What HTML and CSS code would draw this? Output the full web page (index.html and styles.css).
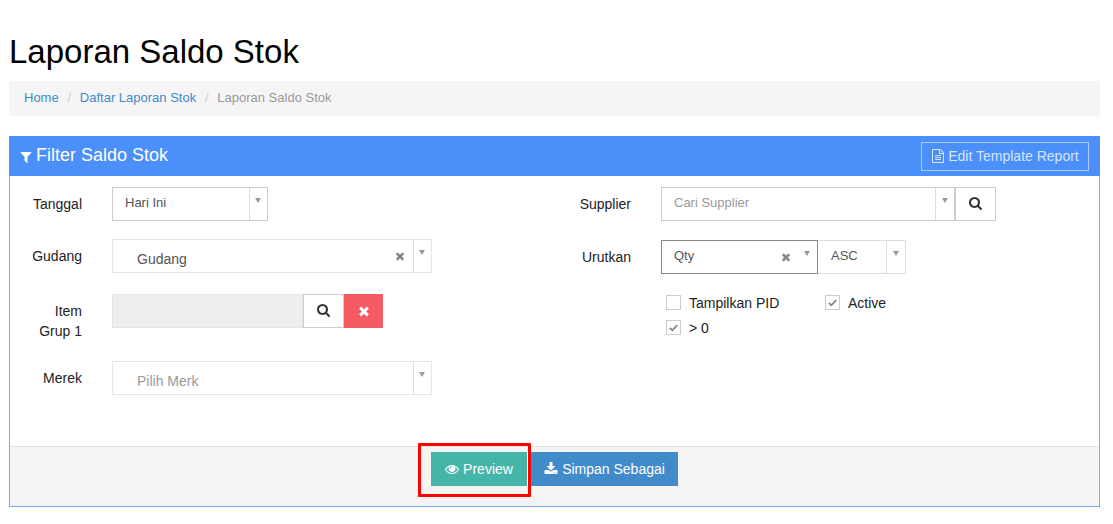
FILE: index.html
```html
<!DOCTYPE html>
<html lang="id">
<head>
<meta charset="utf-8">
<title>Laporan Saldo Stok</title>
<link rel="stylesheet" href="styles.css">
</head>
<body>
<svg class="defs" width="0" height="0" aria-hidden="true">
  <symbol id="i-search" viewBox="0 0 1664 1792"><path d="M1152 704q0-185-131.500-316.500t-316.500-131.500-316.500 131.500-131.500 316.500 131.500 316.500 316.500 131.500 316.500-131.500 131.500-316.500zm512 832q0 52-38 90t-90 38q-54 0-90-38l-343-342q-179 124-399 124-143 0-273.500-55.500t-225-150-150-225-55.500-273.500 55.500-273.500 150-225 225-150 273.500-55.500 273.500 55.500 225 150 150 225 55.500 273.500q0 220-124 399l343 343q37 37 37 90z"/></symbol>
  <symbol id="i-times" viewBox="0 0 1792 1792"><path d="M1490 1322q0 40-28 68l-136 136q-28 28-68 28t-68-28l-294-294-294 294q-28 28-68 28t-68-28l-136-136q-28-28-28-68t28-68l294-294-294-294q-28-28-28-68t28-68l136-136q28-28 68-28t68 28l294 294 294-294q28-28 68-28t68 28l136 136q28 28 28 68t-28 68l-294 294 294 294q28 28 28 68z"/></symbol>
  <symbol id="i-filter" viewBox="0 0 1792 1792"><path d="M1595 295q17 41-14 70l-493 493v742q0 42-39 59-13 5-25 5-27 0-45-19l-256-256q-19-19-19-45v-486l-493-493q-31-29-14-70 17-39 59-39h1280q42 0 59 39z"/></symbol>
  <symbol id="i-download" viewBox="0 0 1792 1792"><path d="M1344 1344q0-26-19-45t-45-19-45 19-19 45 19 45 45 19 45-19 19-45zm256 0q0-26-19-45t-45-19-45 19-19 45 19 45 45 19 45-19 19-45zm128-224v320q0 40-28 68t-68 28h-1472q-40 0-68-28t-28-68v-320q0-40 28-68t68-28h465l135 136q58 56 136 56t136-56l136-136h464q40 0 68 28t28 68zm-325-569q17 41-14 70l-448 448q-18 19-45 19t-45-19l-448-448q-31-29-14-70 17-39 59-39h256v-448q0-26 19-45t45-19h256q26 0 45 19t19 45v448h256q42 0 59 39z"/></symbol>
  <symbol id="i-eye" viewBox="0 0 1792 1792"><path d="M1664 960q-152-236-381-353 61 104 61 225 0 185-131.500 316.500t-316.500 131.500-316.500-131.500-131.500-316.500q0-121 61-225-229 117-381 353 133 205 333.500 326.500t434.500 121.500 434.500-121.500 333.500-326.500zm-720-384q0-20-14-34t-34-14q-125 0-214.500 89.500t-89.500 214.500q0 20 14 34t34 14 34-14 14-34q0-86 61-147t147-61q20 0 34-14t14-34zm848 384q0 34-20 69-140 230-376.500 368.500t-499.500 138.500-499.500-139-376.500-368q-20-35-20-69t20-69q140-229 376.500-368t499.500-139 499.500 139 376.500 368q20 35 20 69z"/></symbol>
  <symbol id="i-file" viewBox="0 0 1792 1792"><path d="M1596 380q28 28 48 76t20 88v1152q0 40-28 68t-68 28h-1344q-40 0-68-28t-28-68v-1600q0-40 28-68t68-28h896q40 0 88 20t76 48zm-444-244v376h376q-10-29-22-41l-313-313q-12-12-41-22zm384 1528v-1024h-416q-40 0-68-28t-28-68v-416h-768v1536h1280zm-1024-864q0-14 9-23t23-9h704q14 0 23 9t9 23v64q0 14-9 23t-23 9h-704q-14 0-23-9t-9-23v-64zm736 224q14 0 23 9t9 23v64q0 14-9 23t-23 9h-704q-14 0-23-9t-9-23v-64q0-14 9-23t23-9h704zm0 256q14 0 23 9t9 23v64q0 14-9 23t-23 9h-704q-14 0-23-9t-9-23v-64q0-14 9-23t23-9h704z"/></symbol>
</svg>

<h1 class="title">Laporan Saldo Stok</h1>
<nav class="breadcrumb">
  <a href="#">Home</a><span class="sep">/</span><a href="#">Daftar Laporan Stok</a><span class="sep">/</span><span class="current">Laporan Saldo Stok</span>
</nav>

<section class="panel">
  <header class="panel-head">
    <h2 class="panel-title"><svg class="ico ico-filter"><use href="#i-filter"/></svg>Filter Saldo Stok</h2>
    <button class="btn-template"><svg class="ico"><use href="#i-file"/></svg>Edit Template Report</button>
  </header>

  <div class="panel-body">
    <div class="col">
      <div class="row row-a">
        <label class="lbl">Tanggal</label>
        <div class="sel sel-tanggal"><span class="sel-text sel-value">Hari Ini</span><span class="arrow-cell"><i class="arrow"></i></span></div>
      </div>
      <div class="row row-b">
        <label class="lbl">Gudang</label>
        <div class="sel sel-wide"><span class="sel-text sel-big">Gudang</span><svg class="clear clear-wide"><use href="#i-times"/></svg><span class="arrow-cell"><i class="arrow"></i></span></div>
      </div>
      <div class="row row-c">
        <label class="lbl">Item<br>Grup 1</label>
        <div class="item-group">
          <div class="item-input"></div>
          <button class="btn-search btn-search-item"><svg class="ico-search"><use href="#i-search"/></svg></button>
          <button class="btn-danger"><svg class="ico-x"><use href="#i-times"/></svg></button>
        </div>
      </div>
      <div class="row">
        <label class="lbl">Merek</label>
        <div class="sel sel-wide"><span class="sel-text sel-big sel-placeholder">Pilih Merk</span><span class="arrow-cell"><i class="arrow"></i></span></div>
      </div>
    </div>

    <div class="col">
      <div class="row row-r1">
        <label class="lbl">Supplier</label>
        <div class="sel sel-supplier"><span class="sel-text sel-placeholder">Cari Supplier</span><span class="arrow-cell arrow-narrow"><i class="arrow"></i></span></div>
        <button class="btn-search"><svg class="ico-search"><use href="#i-search"/></svg></button>
      </div>
      <div class="row row-r2">
        <label class="lbl">Urutkan</label>
        <div class="sel sel-qty"><span class="sel-text sel-value">Qty</span><svg class="clear clear-qty"><use href="#i-times"/></svg><span class="arrow-plain"><i class="arrow"></i></span></div>
        <div class="sel sel-asc"><span class="sel-text sel-value sel-asc-text">ASC</span><span class="arrow-cell arrow-narrow"><i class="arrow"></i></span></div>
      </div>
      <div class="checks">
        <label class="chk chk-pid"><span class="box"></span>Tampilkan PID</label>
        <label class="chk"><span class="box box-on"><svg viewBox="0 0 14 14"><path d="M3 7.500 5.800 10 11 4.500"/></svg></span>Active</label>
        <label class="chk chk-full"><span class="box box-on"><svg viewBox="0 0 14 14"><path d="M3 7.500 5.800 10 11 4.500"/></svg></span>&gt; 0</label>
      </div>
    </div>
  </div>

  <footer class="panel-foot">
    <span class="highlighted"><button class="btn btn-preview"><svg class="ico"><use href="#i-eye"/></svg>Preview</button></span>
    <button class="btn btn-save"><svg class="ico"><use href="#i-download"/></svg>Simpan Sebagai</button>
  </footer>
</section>
</body>
</html>
```
FILE: styles.css
```css
* { box-sizing: border-box; }
html, body { margin: 0; background: #fff; }
body {
  padding: 0 13px 17px 9px;
  font-family: "Liberation Sans", Arial, sans-serif;
  font-size: 14px;
  color: #222;
  overflow: hidden;
}
.defs { position: absolute; }
button { font-family: inherit; cursor: pointer; }

.title {
  margin: 0;
  padding-top: 33px;
  height: 81px;
  font-size: 33px;
  line-height: 38px;
  font-weight: 400;
  color: #000;
}

.breadcrumb {
  height: 35px;
  padding: 0 15px 2px;
  display: flex;
  align-items: center;
  background: #f5f5f5;
  font-size: 13px;
}
.breadcrumb a { color: #428bca; text-decoration: none; }
.sep { color: #ccc; padding: 0 8.75px; }
.current { color: #999; }

.panel {
  margin-top: 20px;
  height: 371px;
  border: 1px solid #7aaaf6;
  border-top: 0;
  display: flex;
  flex-direction: column;
}
.panel-head {
  height: 40px;
  margin: 0 -1px;
  padding: 0 11px 0 10px;
  background: #4a8ffa;
  display: flex;
  align-items: center;
  justify-content: space-between;
}
.panel-title {
  margin: 0;
  padding-bottom: 2px;
  font-size: 18px;
  font-weight: 400;
  color: #fff;
  display: flex;
  align-items: center;
}
.ico { width: 14px; height: 14px; fill: currentColor; flex: none; margin-right: 4px; }
.ico-filter { margin-top: 3px; margin-right: 3px; }
.btn-template {
  width: 168px;
  height: 29px;
  padding: 0 0 1px;
  background: transparent;
  border: 1px solid rgba(255, 255, 255, .55);
  color: #d7e5fd;
  font-size: 14px;
  display: flex;
  align-items: center;
  justify-content: center;
}
.btn-template .ico { margin-right: 3px; }

.panel-body {
  flex: 1;
  padding-top: 11px;
  display: grid;
  grid-template-columns: 549px 1fr;
}
.row { display: flex; align-items: flex-start; }
.row-a { margin-bottom: 18px; }
.row-b { margin-bottom: 21px; }
.row-c { margin-bottom: 20px; }
.row-r1 { margin-bottom: 19px; }
.row-r2 { margin-bottom: 21px; }
.lbl {
  width: 72px;
  margin-right: 30px;
  padding-top: 7px;
  text-align: right;
  line-height: 20px;
  color: #222;
  flex: none;
}

.sel {
  height: 34px;
  display: flex;
  align-items: stretch;
  background: #fff;
  border: 1px solid #ccc;
  flex: none;
}
.sel-text { flex: 1; padding-left: 12px; padding-top: 6px; font-size: 13px; line-height: 18px; }
.sel-value { color: #555; }
.sel-big { padding-left: 24px; padding-top: 10px; font-size: 14px; line-height: 18px; color: #555; }
.sel-placeholder { color: #999; }
.sel-asc-text { padding-left: 13px; }
.sel-tanggal { width: 156px; }
.sel-wide { width: 320px; border-color: #e5e5e5; }
.sel-supplier { width: 294px; }
.sel-qty { width: 157px; border-color: #888; }
.sel-asc { width: 88px; border-color: #ddd; border-left: 0; }

.arrow-cell {
  width: 18px;
  border-left: 1px solid #ddd;
  display: flex;
  justify-content: center;
  padding: 10px 1px 0 0;
}
.arrow-narrow { width: 19px; }
.arrow-plain { width: 20px; display: flex; justify-content: center; padding-top: 10px; }
.arrow {
  width: 0;
  height: 0;
  border-left: 3.5px solid transparent;
  border-right: 3.5px solid transparent;
  border-top: 5px solid #999;
}
.clear { width: 12px; height: 12px; fill: #888; margin-top: 10px; flex: none; }
.clear-wide { margin-right: 7px; }
.clear-qty { margin-right: 5px; }

.item-group { display: flex; height: 34px; }
.item-input { width: 191px; background: #eee; border: 1px solid #e5e5e5; }
.btn-search {
  width: 41px;
  height: 34px;
  padding: 0;
  background: #fff;
  border: 1px solid #ccc;
  display: flex;
  align-items: center;
  justify-content: center;
}
.btn-search-item { border-left-color: #ccc; }
.ico-search { width: 13px; height: 14px; fill: #333; }
.btn-danger {
  width: 39px;
  height: 34px;
  padding: 0;
  border: 0;
  background: #f55a63;
  display: flex;
  align-items: center;
  justify-content: center;
}
.ico-x { width: 14px; height: 14px; fill: #fff; }

.checks {
  margin-left: 107px;
  display: grid;
  grid-template-columns: 159px 1fr;
  row-gap: 10px;
}
.chk { display: flex; align-items: center; height: 15px; color: #222; }
.chk-full { grid-column: 1 / -1; }
.box {
  width: 15px;
  height: 15px;
  margin-right: 8px;
  border: 1px solid #ccc;
  background: #fff;
  flex: none;
}
.box svg { display: block; width: 13px; height: 13px; fill: none; stroke: #888; stroke-width: 2; }

.panel-foot {
  height: 60px;
  padding-top: 5px;
  background: #f4f4f4;
  border-top: 1px solid #e5e5e5;
  display: flex;
  justify-content: center;
  align-items: flex-start;
  gap: 4px;
}
.highlighted { position: relative; display: flex; }
.highlighted::after {
  content: "";
  position: absolute;
  left: -13px;
  right: -4px;
  top: -9px;
  bottom: -11px;
  border: 3px solid #f00;
  border-radius: 1px;
  pointer-events: none;
}
.btn {
  height: 34px;
  padding: 0;
  border: 0;
  color: #fff;
  font-size: 14px;
  display: flex;
  align-items: center;
  justify-content: center;
}
.btn-preview { width: 96px; background: #45b5aa; }
.btn-save { width: 147px; background: #428bca; }
```
